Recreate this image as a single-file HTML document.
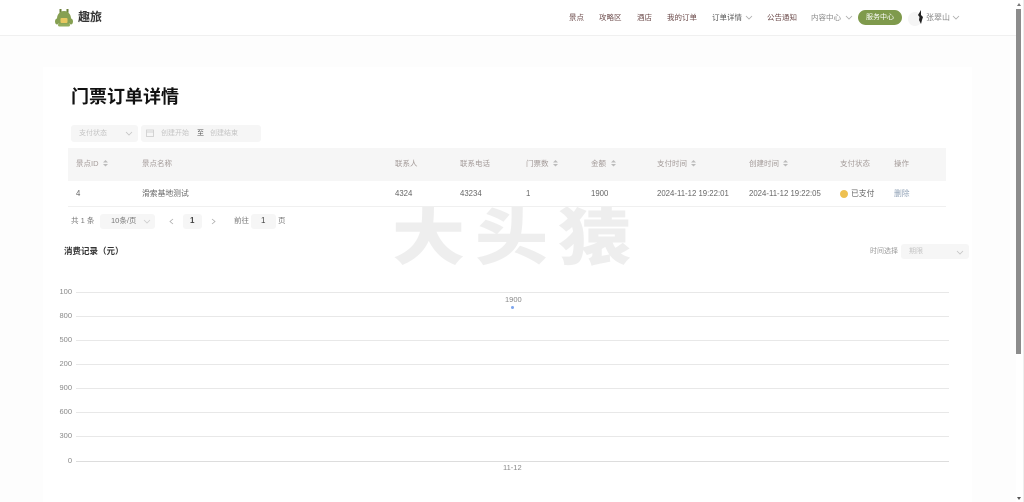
<!DOCTYPE html>
<html><head><meta charset="utf-8"><style>
*{box-sizing:border-box}
html,body{margin:0;padding:0;width:1024px;height:502px;overflow:hidden;background:#fdfdfd;font-family:"Liberation Sans","Noto Sans CJK SC",sans-serif}
.a{position:absolute;white-space:nowrap;line-height:1}
.nav{font-size:7.5px;top:14px;color:#6b4a4a}
.th{font-size:7.5px;top:160px;color:#a39a98}
.td{font-size:7.8px;top:190px;color:#666}
.y{font-size:7.5px;color:#888;width:32px;text-align:right;left:40px}
.g{position:absolute;left:76px;width:873px;height:1px;background:#e8e8e8}
.box{position:absolute;background:#f6f6f6;border-radius:3px}
svg{position:absolute;overflow:visible}
</style></head><body>
<div style="position:absolute;left:0;top:0;width:1016px;height:36px;background:#fff;border-bottom:1px solid #f0f0f0"></div>
<div style="position:absolute;left:43px;top:67px;width:929px;height:435px;background:#fff"></div>
<svg style="left:55px;top:8px" width="20" height="20" viewBox="0 0 20 20"><path d="M5.500 1v4M12.500 1v4" stroke="#6b7f3a" stroke-width="2"/><ellipse cx="9" cy="10.500" rx="7" ry="7.500" fill="#86a052"/><ellipse cx="2" cy="13.500" rx="2" ry="3" fill="#86a052"/><ellipse cx="16" cy="13.500" rx="2" ry="3" fill="#86a052"/><rect x="5.500" y="10" width="7" height="5" rx="1" fill="#e8c860"/><rect x="3" y="15.500" width="12" height="3" rx="1.500" fill="#93ad5c"/></svg>
<div class="a" style="left:78px;top:11px;font-size:12px;font-weight:700;color:#333">趣旅</div>
<div class="a nav" style="left:569px">景点</div>
<div class="a nav" style="left:599px">攻略区</div>
<div class="a nav" style="left:637px">酒店</div>
<div class="a nav" style="left:667px">我的订单</div>
<div class="a nav" style="left:712px;color:#555">订单详情</div>
<svg style="left:745px;top:15px" width="8" height="5" fill="none" stroke="#aaa" stroke-width=".8"><path d="M1 1l3 3 3-3"/></svg>
<div class="a nav" style="left:767px">公告通知</div>
<div class="a nav" style="left:811px;color:#888">内容中心</div>
<svg style="left:845px;top:15px" width="8" height="5" fill="none" stroke="#aaa" stroke-width=".8"><path d="M1 1l3 3 3-3"/></svg>
<div class="a" style="left:858px;top:10px;width:44px;height:15px;border-radius:8px;background:#7f9a4c;color:#fff;font-size:7px;line-height:15px;text-align:center">服务中心</div>
<div style="position:absolute;left:908px;top:12px;width:14px;height:14px;border-radius:50%;background:#f5f5f5"></div>
<svg style="left:917px;top:10px" width="7" height="14" viewBox="0 0 7 14"><path d="M4 0L1 5l1.500 2L2 10l2 4 1-4 1-3-2-2z" fill="#222"/></svg>
<div class="a nav" style="left:926px;color:#888;font-size:8px">张翠山</div>
<svg style="left:952px;top:15px" width="8" height="5" fill="none" stroke="#aaa" stroke-width=".8"><path d="M1 1l3 3 3-3"/></svg>

<div style="position:absolute;left:1016px;top:0;width:8px;height:502px;background:#fff;border-right:1px solid #eee"></div>
<div style="position:absolute;left:1016px;top:9px;width:5px;height:345px;background:#8c8c8c"></div>
<svg style="left:1016px;top:2px" width="6" height="5"><path d="M3 1l2 3H1z" fill="#777"/></svg>
<svg style="left:1016px;top:496px" width="6" height="5"><path d="M1 1h4L3 4z" fill="#555"/></svg>

<div class="a" style="left:71px;top:88px;font-size:18px;font-weight:700;color:#111">门票订单详情</div>
<div class="box" style="left:71px;top:125px;width:67px;height:17px"></div>
<div class="a" style="left:79px;top:130px;font-size:7px;color:#c4c4c4">支付状态</div>
<svg style="left:125px;top:131px" width="8" height="5" fill="none" stroke="#c4c4c4" stroke-width=".8"><path d="M1 1l3 3 3-3"/></svg>
<div class="box" style="left:141px;top:125px;width:120px;height:17px"></div>
<svg style="left:146px;top:129px" width="8" height="8" fill="none" stroke="#ccc" stroke-width=".8"><rect x=".5" y="1" width="7" height="6.500"/><path d="M.5 3h7"/></svg>
<div class="a" style="left:161px;top:130px;font-size:7px;color:#c4c4c4">创建开始</div>
<div class="a" style="left:197px;top:130px;font-size:7px;color:#555">至</div>
<div class="a" style="left:210px;top:130px;font-size:7px;color:#c4c4c4">创建结束</div>

<div class="a" style="left:392px;top:208px;font-size:73px;font-weight:900;color:#eeeeee;letter-spacing:10px;line-height:73px;height:73px;transform:scaleY(.84);transform-origin:0 0">大头猿</div>

<div style="position:absolute;left:68px;top:148px;width:878px;height:33px;background:#f6f6f6"></div>
<div style="position:absolute;left:68px;top:206px;width:878px;height:1px;background:#f0f0f0"></div>
<div class="a th" style="left:76px">景点ID</div>
<div class="a th" style="left:142px">景点名称</div>
<div class="a th" style="left:395px">联系人</div>
<div class="a th" style="left:460px">联系电话</div>
<div class="a th" style="left:526px">门票数</div>
<div class="a th" style="left:591px">金额</div>
<div class="a th" style="left:657px">支付时间</div>
<div class="a th" style="left:749px">创建时间</div>
<div class="a th" style="left:840px">支付状态</div>
<div class="a th" style="left:894px">操作</div>
<svg style="left:103px;top:160px" width="5" height="7" fill="#bbb"><path d="M2.500 0L5 2.500H0zM0 4h5L2.500 6.500z"/></svg>
<svg style="left:553px;top:160px" width="5" height="7" fill="#bbb"><path d="M2.500 0L5 2.500H0zM0 4h5L2.500 6.500z"/></svg>
<svg style="left:611px;top:160px" width="5" height="7" fill="#bbb"><path d="M2.500 0L5 2.500H0zM0 4h5L2.500 6.500z"/></svg>
<svg style="left:691px;top:160px" width="5" height="7" fill="#bbb"><path d="M2.500 0L5 2.500H0zM0 4h5L2.500 6.500z"/></svg>
<svg style="left:783px;top:160px" width="5" height="7" fill="#bbb"><path d="M2.500 0L5 2.500H0zM0 4h5L2.500 6.500z"/></svg>

<div class="a td" style="left:76px">4</div>
<div class="a td" style="left:142px">滑索基地测试</div>
<div class="a td" style="left:395px">4324</div>
<div class="a td" style="left:460px">43234</div>
<div class="a td" style="left:526px">1</div>
<div class="a td" style="left:591px">1900</div>
<div class="a td" style="left:657px">2024-11-12 19:22:01</div>
<div class="a td" style="left:749px">2024-11-12 19:22:05</div>
<div style="position:absolute;left:840px;top:190px;width:8px;height:8px;border-radius:50%;background:#eec050"></div>
<div class="a td" style="left:851px">已支付</div>
<div class="a td" style="left:894px;color:#8fa0b5">删除</div>

<div class="a" style="left:71px;top:217px;font-size:7.5px;color:#777">共 1 条</div>
<div class="box" style="left:100px;top:214px;width:55px;height:15px"></div>
<div class="a" style="left:111px;top:217px;font-size:7.5px;color:#777">10条/页</div>
<svg style="left:143px;top:219px" width="8" height="5" fill="none" stroke="#ccc" stroke-width=".8"><path d="M1 1l3 3 3-3"/></svg>
<svg style="left:169px;top:218px" width="5" height="7" fill="none" stroke="#aaa" stroke-width=".8"><path d="M4 1L1 3.500 4 6"/></svg>
<div class="box" style="left:183px;top:214px;width:19px;height:15px"></div>
<div class="a" style="left:190px;top:217px;font-size:8px;font-weight:700;color:#444">1</div>
<svg style="left:211px;top:218px" width="5" height="7" fill="none" stroke="#aaa" stroke-width=".8"><path d="M1 1l3 2.500L1 6"/></svg>
<div class="a" style="left:234px;top:217px;font-size:7.5px;color:#777">前往</div>
<div class="box" style="left:251px;top:214px;width:25px;height:15px"></div>
<div class="a" style="left:261px;top:217px;font-size:8px;color:#444">1</div>
<div class="a" style="left:278px;top:217px;font-size:7.5px;color:#777">页</div>

<div class="a" style="left:64px;top:247px;font-size:8.500px;font-weight:700;color:#333">消费记录（元）</div>
<div class="a" style="left:870px;top:248px;font-size:7px;color:#999">时间选择</div>
<div class="box" style="left:901px;top:244px;width:68px;height:15px"></div>
<div class="a" style="left:909px;top:248px;font-size:7px;color:#c4c4c4">期限</div>
<svg style="left:956px;top:250px" width="8" height="5" fill="none" stroke="#c4c4c4" stroke-width=".8"><path d="M1 1l3 3 3-3"/></svg>

<div class="g" style="top:292px"></div><div class="a y" style="top:288px">100</div>
<div class="g" style="top:316px"></div><div class="a y" style="top:312px">800</div>
<div class="g" style="top:340px"></div><div class="a y" style="top:336px">500</div>
<div class="g" style="top:364px"></div><div class="a y" style="top:360px">200</div>
<div class="g" style="top:388px"></div><div class="a y" style="top:384px">900</div>
<div class="g" style="top:412px"></div><div class="a y" style="top:408px">600</div>
<div class="g" style="top:436px"></div><div class="a y" style="top:432px">300</div>
<div class="g" style="top:461px;background:#ddd"></div><div class="a y" style="top:457px">0</div>
<div class="a" style="left:505px;top:296px;font-size:7.5px;color:#888">1900</div>
<div style="position:absolute;left:511px;top:306px;width:3px;height:3px;border-radius:50%;background:#7ea6ee"></div>
<div class="a" style="left:503px;top:464px;font-size:7.5px;color:#888">11-12</div>
</body></html>
